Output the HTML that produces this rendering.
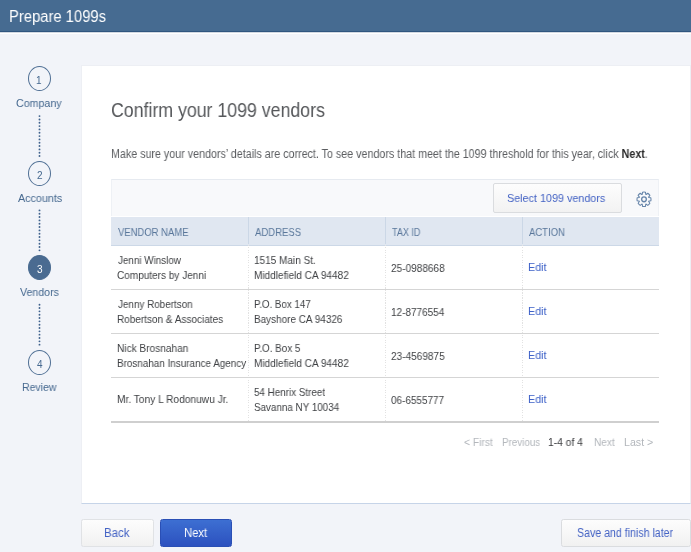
<!DOCTYPE html>
<html><head><meta charset="utf-8">
<style>
*{box-sizing:border-box;margin:0;padding:0}
html,body{width:691px;height:552px;overflow:hidden}
body{background:#f2f4f9;font-family:"Liberation Sans",sans-serif;position:relative}
.t{position:absolute;white-space:nowrap;line-height:1;transform-origin:0 0;will-change:transform}
.a{position:absolute}
.hdr{left:0;top:0;width:691px;height:32px;background:#466b91;border-bottom:1px solid #30567f}
.hdrsh{left:0;top:32px;width:691px;height:2px;background:linear-gradient(#d3d9e2 0 1px,#ffffff 1px 2px)}
.step{left:28px;width:23px;height:24.8px;border:1px solid #4f6f94;border-radius:50%}
.step.act{background:#4a6b91;border-color:#4a6b91}
.dots{left:38.7px;width:1.6px;background:repeating-linear-gradient(#42648d 0 1.6px,transparent 1.6px 3.33px)}
.card{left:80.5px;top:65px;width:610px;height:439px;background:#fff;border:1px solid #edeff4;border-bottom:1px solid #c6d4e8}
.tbar{left:111px;top:179px;width:548px;height:37px;background:#f8f9fb;border-top:1px solid #e6eaf0;border-left:1px solid #eef1f5;border-right:1px solid #eef1f5}
.selbtn{left:493px;top:183px;width:128.5px;height:29.6px;background:linear-gradient(#fdfdfd,#f2f2f2);border:1px solid #dadcdf;border-radius:2px}
.thead{left:111px;top:217px;width:548px;height:28.5px;background:#e0e7f1;border-bottom:1.5px solid #ccd8e7}
.hdiv{top:217px;width:1px;height:27px;background:#cbd7e6}
.vdot{top:245px;width:1px;height:176px;background:repeating-linear-gradient(#e2e2e2 0 1px,transparent 1px 2.5px)}
.rsep{left:111px;width:548px;height:1.5px;background:#d5d5d5}
.rbot{left:111px;top:420.5px;width:548px;height:2px;background:#cfcfcf}
.btn{top:518.8px;height:28.4px;border-radius:2.5px}
.bk{left:80.5px;width:73.5px;background:linear-gradient(#fdfdfd,#f1f1f1);border:1px solid #e0e2e5;box-shadow:0 0 0.5px rgba(0,0,0,.08)}
.nx{left:160px;width:72px;background:linear-gradient(#3d6fd2,#2c51bf);border:1px solid #2a4fb5}
.sv{left:560.5px;width:130px;background:linear-gradient(#fdfdfd,#f1f1f1);border:1px solid #dadcdf}

</style></head><body>
<div class="a hdr"></div>
<div class="a hdrsh"></div>
<div class="a step" style="top:66.2px"></div>
<div class="a step" style="top:161.1px"></div>
<div class="a step act" style="top:255.3px"></div>
<div class="a step" style="top:350px"></div>
<svg class="a" style="left:0;top:0" width="80" height="400"><g fill="#3f628c"><circle cx="39.5" cy="116.10" r="0.95"/><circle cx="39.5" cy="119.43" r="0.95"/><circle cx="39.5" cy="122.76" r="0.95"/><circle cx="39.5" cy="126.09" r="0.95"/><circle cx="39.5" cy="129.42" r="0.95"/><circle cx="39.5" cy="132.75" r="0.95"/><circle cx="39.5" cy="136.08" r="0.95"/><circle cx="39.5" cy="139.41" r="0.95"/><circle cx="39.5" cy="142.74" r="0.95"/><circle cx="39.5" cy="146.07" r="0.95"/><circle cx="39.5" cy="149.40" r="0.95"/><circle cx="39.5" cy="152.73" r="0.95"/><circle cx="39.5" cy="156.06" r="0.95"/><circle cx="39.5" cy="210.40" r="0.95"/><circle cx="39.5" cy="213.73" r="0.95"/><circle cx="39.5" cy="217.06" r="0.95"/><circle cx="39.5" cy="220.39" r="0.95"/><circle cx="39.5" cy="223.72" r="0.95"/><circle cx="39.5" cy="227.05" r="0.95"/><circle cx="39.5" cy="230.38" r="0.95"/><circle cx="39.5" cy="233.71" r="0.95"/><circle cx="39.5" cy="237.04" r="0.95"/><circle cx="39.5" cy="240.37" r="0.95"/><circle cx="39.5" cy="243.70" r="0.95"/><circle cx="39.5" cy="247.03" r="0.95"/><circle cx="39.5" cy="250.36" r="0.95"/><circle cx="39.5" cy="304.70" r="0.95"/><circle cx="39.5" cy="308.03" r="0.95"/><circle cx="39.5" cy="311.36" r="0.95"/><circle cx="39.5" cy="314.69" r="0.95"/><circle cx="39.5" cy="318.02" r="0.95"/><circle cx="39.5" cy="321.35" r="0.95"/><circle cx="39.5" cy="324.68" r="0.95"/><circle cx="39.5" cy="328.01" r="0.95"/><circle cx="39.5" cy="331.34" r="0.95"/><circle cx="39.5" cy="334.67" r="0.95"/><circle cx="39.5" cy="338.00" r="0.95"/><circle cx="39.5" cy="341.33" r="0.95"/><circle cx="39.5" cy="344.66" r="0.95"/></g></svg>
<div class="a card"></div>
<div class="a tbar"></div>
<div class="a selbtn"></div>
<svg class="a" style="left:636px;top:191.1px" width="16" height="16.6" viewBox="0 0 16 16" preserveAspectRatio="none">
<g fill="none" stroke="#6584a9" stroke-width="1.05" stroke-linejoin="round">
<path d="M6.26 3.21L6.54 1.15A7.0 7.0 0 0 1 9.46 1.15L9.74 3.21A5.1 5.1 0 0 1 10.16 3.38L11.81 2.13A7.0 7.0 0 0 1 13.87 4.19L12.62 5.84A5.1 5.1 0 0 1 12.79 6.26L14.85 6.54A7.0 7.0 0 0 1 14.85 9.46L12.79 9.74A5.1 5.1 0 0 1 12.62 10.16L13.87 11.81A7.0 7.0 0 0 1 11.81 13.87L10.16 12.62A5.1 5.1 0 0 1 9.74 12.79L9.46 14.85A7.0 7.0 0 0 1 6.54 14.85L6.26 12.79A5.1 5.1 0 0 1 5.84 12.62L4.19 13.87A7.0 7.0 0 0 1 2.13 11.81L3.38 10.16A5.1 5.1 0 0 1 3.21 9.74L1.15 9.46A7.0 7.0 0 0 1 1.15 6.54L3.21 6.26A5.1 5.1 0 0 1 3.38 5.84L2.13 4.19A7.0 7.0 0 0 1 4.19 2.13L5.84 3.38A5.1 5.1 0 0 1 6.26 3.21Z"/>
<circle cx="8" cy="8" r="2.35" stroke-width="1.3"/>
</g></svg>
<div class="a thead"></div>
<div class="a hdiv" style="left:248px"></div>
<div class="a hdiv" style="left:385px"></div>
<div class="a hdiv" style="left:521.5px"></div>
<div class="a vdot" style="left:248px"></div>
<div class="a vdot" style="left:385px"></div>
<div class="a vdot" style="left:521.5px"></div>
<div class="a rsep" style="top:288.5px"></div>
<div class="a rsep" style="top:332.5px"></div>
<div class="a rsep" style="top:376.5px"></div>
<div class="a rbot"></div>
<div class="a btn bk"></div>
<div class="a btn nx"></div>
<div class="a btn sv"></div>

<div class="t" style="left:8.88px;top:8.80px;font-size:16px;color:#fff;transform:scaleX(0.9243);">Prepare 1099s</div>
<div class="t" style="left:36.15px;top:76.20px;font-size:10px;color:#45688f;transform:scaleX(1.0000);">1</div>
<div class="t" style="left:16.03px;top:97.80px;font-size:11px;color:#45688f;transform:scaleX(0.9696);">Company</div>
<div class="t" style="left:36.50px;top:171.00px;font-size:10px;color:#45688f;transform:scaleX(1.0000);">2</div>
<div class="t" style="left:17.60px;top:192.70px;font-size:11px;color:#45688f;transform:scaleX(0.9778);">Accounts</div>
<div class="t" style="left:36.50px;top:265.00px;font-size:10px;color:#fff;transform:scaleX(1.0000);">3</div>
<div class="t" style="left:20.30px;top:287.20px;font-size:11px;color:#45688f;transform:scaleX(0.9650);">Vendors</div>
<div class="t" style="left:36.95px;top:360.00px;font-size:10px;color:#45688f;transform:scaleX(1.0000);">4</div>
<div class="t" style="left:21.74px;top:381.90px;font-size:11px;color:#45688f;transform:scaleX(0.9571);">Review</div>
<div class="t" style="left:111.09px;top:100.80px;font-size:19.5px;color:#55575a;transform:scaleX(0.9094);">Confirm your 1099 vendors</div>
<div class="t" style="left:110.61px;top:147.90px;font-size:12px;color:#5b5d60;transform:scaleX(0.8922);">Make sure your vendors’ details are correct. To see vendors that meet the 1099 threshold for this year, click <b style="color:#2b2b2b">Next</b>.</div>
<div class="t" style="left:507.46px;top:193.10px;font-size:11.5px;color:#4362c4;transform:scaleX(0.9379);">Select 1099 vendors</div>
<div class="t" style="left:117.70px;top:226.60px;font-size:10.5px;color:#58769a;transform:scaleX(0.9013);">VENDOR NAME</div>
<div class="t" style="left:254.70px;top:226.60px;font-size:10.5px;color:#58769a;transform:scaleX(0.9080);">ADDRESS</div>
<div class="t" style="left:392.20px;top:226.60px;font-size:10.5px;color:#58769a;transform:scaleX(0.8576);">TAX ID</div>
<div class="t" style="left:528.50px;top:226.60px;font-size:10.5px;color:#58769a;transform:scaleX(0.9051);">ACTION</div>
<div class="t" style="left:117.70px;top:255.20px;font-size:10.5px;color:#3f4144;transform:scaleX(0.9373);">Jenni Winslow</div>
<div class="t" style="left:116.74px;top:270.30px;font-size:10.5px;color:#3f4144;transform:scaleX(0.9554);">Computers by Jenni</div>
<div class="t" style="left:254.15px;top:255.20px;font-size:10.5px;color:#3f4144;transform:scaleX(0.9540);">1515 Main St.</div>
<div class="t" style="left:254.14px;top:270.30px;font-size:10.5px;color:#3f4144;transform:scaleX(0.9551);">Middlefield CA 94482</div>
<div class="t" style="left:391.14px;top:262.60px;font-size:10.5px;color:#3f4144;transform:scaleX(0.9582);">25-0988668</div>
<div class="t" style="left:527.76px;top:261.80px;font-size:11.5px;color:#3e62c8;transform:scaleX(0.9368);">Edit</div>
<div class="t" style="left:117.70px;top:299.20px;font-size:10.5px;color:#3f4144;transform:scaleX(0.9405);">Jenny Robertson</div>
<div class="t" style="left:116.75px;top:314.30px;font-size:10.5px;color:#3f4144;transform:scaleX(0.9518);">Robertson &amp; Associates</div>
<div class="t" style="left:254.17px;top:299.20px;font-size:10.5px;color:#3f4144;transform:scaleX(0.9283);">P.O. Box 147</div>
<div class="t" style="left:254.15px;top:314.30px;font-size:10.5px;color:#3f4144;transform:scaleX(0.9467);">Bayshore CA 94326</div>
<div class="t" style="left:391.15px;top:306.60px;font-size:10.5px;color:#3f4144;transform:scaleX(0.9509);">12-8776554</div>
<div class="t" style="left:527.76px;top:305.80px;font-size:11.5px;color:#3e62c8;transform:scaleX(0.9368);">Edit</div>
<div class="t" style="left:116.74px;top:343.20px;font-size:10.5px;color:#3f4144;transform:scaleX(0.9625);">Nick Brosnahan</div>
<div class="t" style="left:116.76px;top:358.30px;font-size:10.5px;color:#3f4144;transform:scaleX(0.9412);">Brosnahan Insurance Agency</div>
<div class="t" style="left:254.16px;top:343.20px;font-size:10.5px;color:#3f4144;transform:scaleX(0.9396);">P.O. Box 5</div>
<div class="t" style="left:254.14px;top:358.30px;font-size:10.5px;color:#3f4144;transform:scaleX(0.9551);">Middlefield CA 94482</div>
<div class="t" style="left:391.14px;top:350.60px;font-size:10.5px;color:#3f4144;transform:scaleX(0.9582);">23-4569875</div>
<div class="t" style="left:527.76px;top:349.80px;font-size:11.5px;color:#3e62c8;transform:scaleX(0.9368);">Edit</div>
<div class="t" style="left:116.73px;top:394.10px;font-size:10.5px;color:#3f4144;transform:scaleX(0.9681);">Mr. Tony L Rodonuwu Jr.</div>
<div class="t" style="left:254.16px;top:387.20px;font-size:10.5px;color:#3f4144;transform:scaleX(0.9373);">54 Henrix Street</div>
<div class="t" style="left:254.16px;top:402.30px;font-size:10.5px;color:#3f4144;transform:scaleX(0.9371);">Savanna NY 10034</div>
<div class="t" style="left:391.15px;top:394.60px;font-size:10.5px;color:#3f4144;transform:scaleX(0.9473);">06-6555777</div>
<div class="t" style="left:527.76px;top:393.80px;font-size:11.5px;color:#3e62c8;transform:scaleX(0.9368);">Edit</div>
<div class="t" style="left:464.02px;top:436.80px;font-size:10.5px;color:#b3b7bc;transform:scaleX(0.9786);">&lt; First</div>
<div class="t" style="left:502.06px;top:436.80px;font-size:10.5px;color:#b3b7bc;transform:scaleX(0.9359);">Previous</div>
<div class="t" style="left:548.12px;top:436.80px;font-size:10.5px;color:#3a3b3e;transform:scaleX(0.9794);">1-4 of 4</div>
<div class="t" style="left:594.44px;top:436.80px;font-size:10.5px;color:#b3b7bc;transform:scaleX(0.9600);">Next</div>
<div class="t" style="left:624.19px;top:436.80px;font-size:10.5px;color:#b3b7bc;transform:scaleX(1.0148);">Last &gt;</div>
<div class="t" style="left:104.35px;top:527.20px;font-size:12px;color:#4362c4;transform:scaleX(0.9520);">Back</div>
<div class="t" style="left:184.06px;top:527.20px;font-size:12px;color:#fff;transform:scaleX(0.9391);">Next</div>
<div class="t" style="left:576.72px;top:527.00px;font-size:12px;color:#4362c4;transform:scaleX(0.8833);">Save and finish later</div>
</body></html>
